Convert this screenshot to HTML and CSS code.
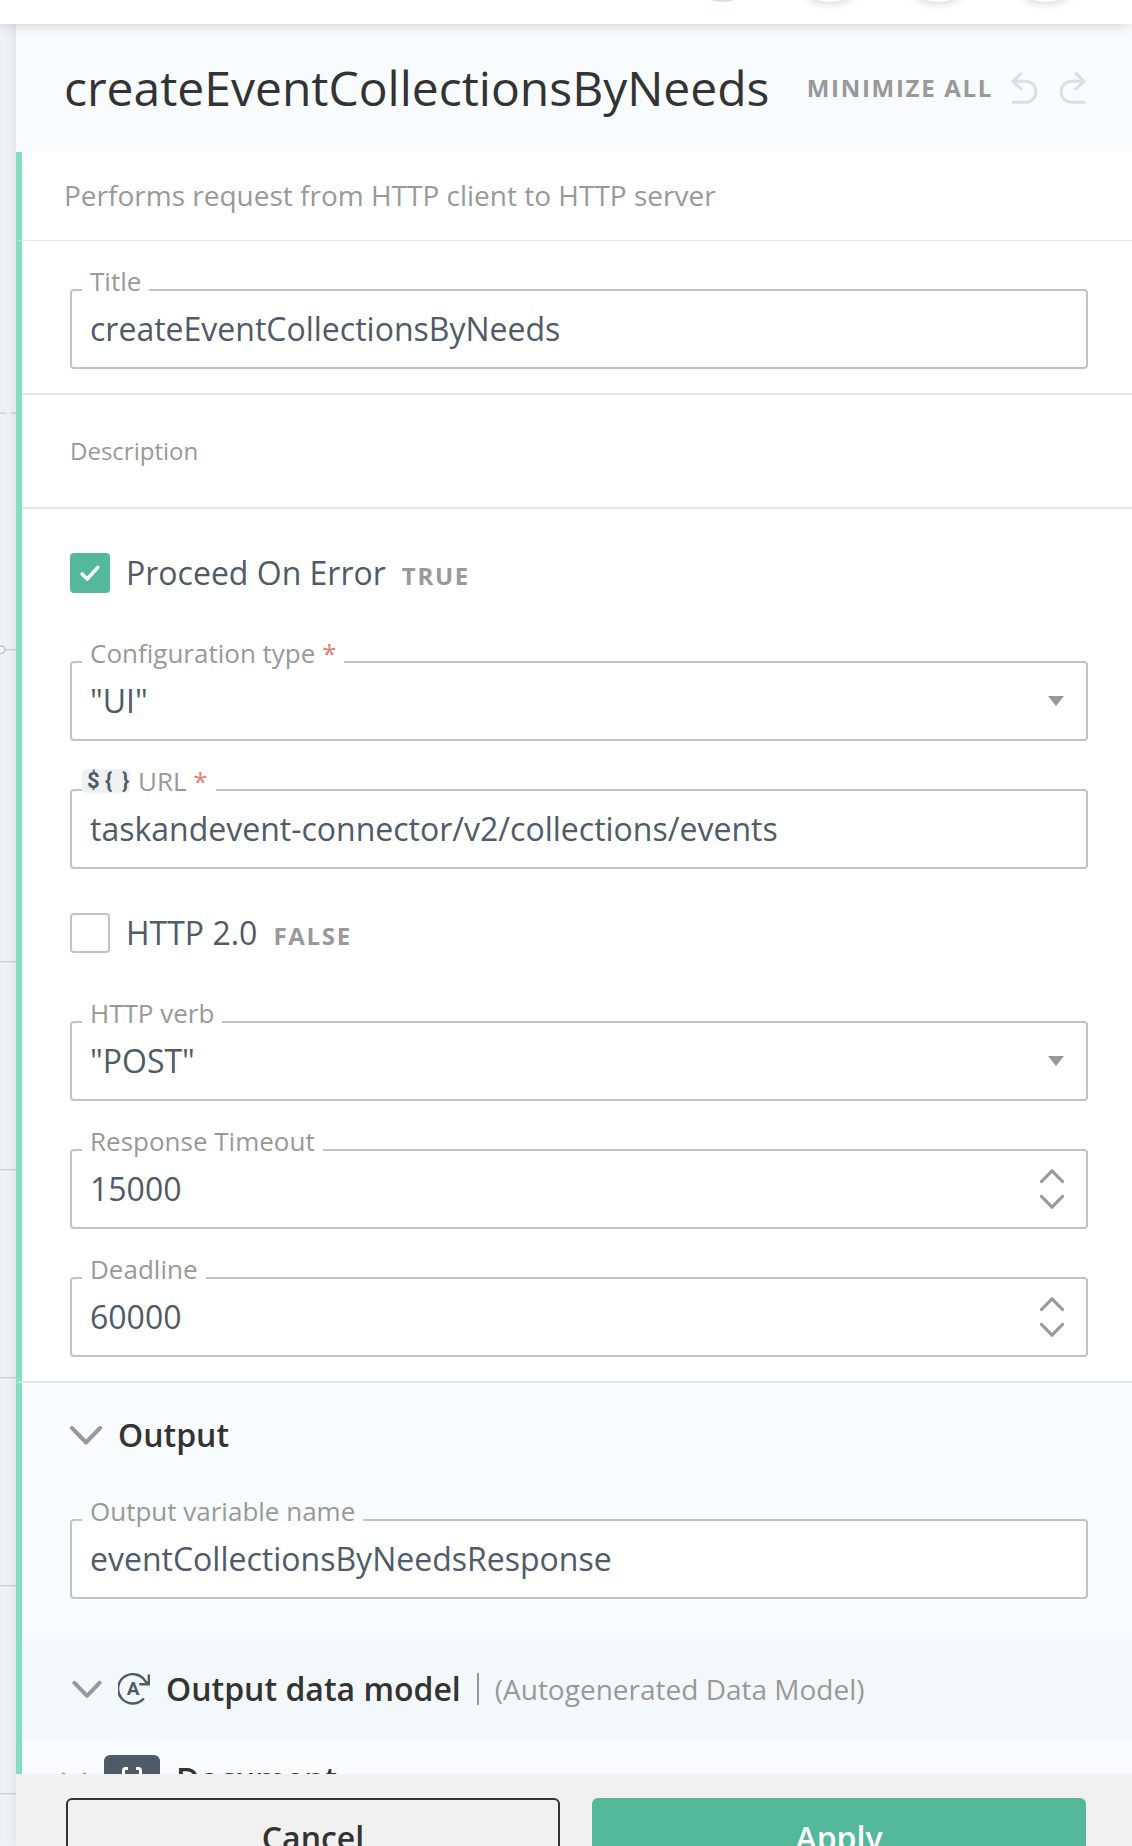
FILE: index.html
```html
<!DOCTYPE html>
<html lang="en">
<head>
<meta charset="utf-8">
<title>createEventCollectionsByNeeds</title>
<link rel="stylesheet" href="styles.css">
</head>
<body>
<div class="app">
  <header class="topbar">
    <span class="round round-active"></span>
    <span class="round"></span>
    <span class="round"></span>
    <span class="round"></span>
  </header>
  <div class="workspace">
    <aside class="canvas">
      <svg width="16" height="1822" viewBox="0 24 16 1822" fill="none" stroke="#cfd3d8" stroke-width="1.5">
        <path d="M0 413.3h6.5M11 413.3h5M5 649.7h11M0 961.7h16M0 1169.7h16M0 1377.7h16M0 1585.7h16M0 1793.7h16"/>
        <circle cx="1" cy="649.7" r="3.8" fill="#f4f7f4" stroke="#bcc8c2"/>
      </svg>
    </aside>
    <main class="panel">
      <div class="panel-head">
        <h1>createEventCollectionsByNeeds</h1>
        <button class="minimize">MINIMIZE ALL</button>
        <svg class="history" width="26" height="34" viewBox="0 0 26 34"><path d="M10 2.700 1.900 10.300l8.100 7.600M1.900 10.300H14.500a10.500 10.500 0 0 1 0 21H1.900"/></svg>
        <svg class="history redo" width="26" height="34" viewBox="0 0 26 34"><path d="M16 2.700l8.100 7.600-8.100 7.600M24.100 10.300H11.500a10.500 10.500 0 0 0 0 21h12.600"/></svg>
      </div>

      <div class="panel-body">
        <section class="summary">Performs request from HTTP client to HTTP server</section>

        <section class="config">
          <div class="group group-title">
            <div class="field"><label>Title</label><span class="value">createEventCollectionsByNeeds</span></div>
          </div>
          <div class="group group-description">Description</div>
          <div class="group group-fields">
            <div class="check">
              <span class="box box-on"><svg width="20" height="17" viewBox="0 0 20 17"><path d="M2.2 9l5 5L17.8 2.4"/></svg></span>
              <span class="check-label">Proceed On Error</span><span class="state">TRUE</span>
            </div>
            <div class="field">
              <label>Configuration type <i>*</i></label><span class="value">"UI"</span>
              <svg class="caret" width="16" height="10" viewBox="0 0 16 10"><path d="M0 0h16L8 10z"/></svg>
            </div>
            <div class="field">
              <label class="with-chip"><span class="chip"><b>$</b><b>{</b><b>}</b></span>URL <i>*</i></label><span class="value">taskandevent-connector/v2/collections/events</span>
            </div>
            <div class="check check-inner">
              <span class="box"></span>
              <span class="check-label">HTTP 2.0</span><span class="state">FALSE</span>
            </div>
            <div class="field">
              <label>HTTP verb</label><span class="value">"POST"</span>
              <svg class="caret" width="16" height="10" viewBox="0 0 16 10"><path d="M0 0h16L8 10z"/></svg>
            </div>
            <div class="field">
              <label>Response Timeout</label><span class="value">15000</span>
              <svg class="stepper" width="24" height="40" viewBox="0 0 24 40"><path d="M1.500 12.500 12 1.800l10.500 10.700M1.500 27.500 12 38.200l10.500-10.700"/></svg>
            </div>
            <div class="field">
              <label>Deadline</label><span class="value">60000</span>
              <svg class="stepper" width="24" height="40" viewBox="0 0 24 40"><path d="M1.500 12.500 12 1.800l10.500 10.700M1.500 27.500 12 38.200l10.500-10.700"/></svg>
            </div>
          </div>
        </section>

        <section class="output">
          <div class="output-head">
            <svg class="chevron" width="32" height="20" viewBox="0 0 32 20"><path d="M2 3l14 14.500L30 3"/></svg>
            <h2>Output</h2>
          </div>
          <div class="output-field">
            <div class="field"><label>Output variable name</label><span class="value">eventCollectionsByNeedsResponse</span></div>
          </div>
          <div class="model">
            <svg class="chevron" width="30" height="18" viewBox="0 0 30 18"><path d="M2.500 2.800l12.500 13L27.500 2.800"/></svg>
            <svg class="auto" width="32" height="32" viewBox="0 0 32 32">
              <path d="M25.200 26.200A14.700 14.700 0 1 1 27.500 8.500L30.500 11.300M30.800 2.500V11.300H22.300"/>
              <text x="15.100" y="22" text-anchor="middle">A</text>
            </svg>
            <h2>Output data model</h2>
            <span class="divider"></span>
            <span class="hint">(Autogenerated Data Model)</span>
          </div>
          <div class="document">
            <svg class="chevron" width="26" height="16" viewBox="0 0 26 16"><path d="M2.500 2.500L13 13.500 23.500 2.500"/></svg>
            <span class="type"><svg width="20" height="24" viewBox="0 0 20 24"><path d="M6 1.500H3.500Q1.500 1.500 1.500 3.500V20.500Q1.500 22.500 3.500 22.500H6M14 1.500h2.500Q18.500 1.500 18.500 3.500V20.500Q18.500 22.500 16.500 22.500H14"/></svg></span>
            <h2>Document</h2>
          </div>
        </section>
      </div>

      <footer class="actions">
        <button class="btn cancel">Cancel</button>
        <button class="btn apply">Apply</button>
      </footer>
    </main>
  </div>
</div>
</body>
</html>
```
FILE: styles.css
```css
* { box-sizing: border-box; }
body {
  margin: 0;
  font-family: "Open Sans", "Noto Sans", sans-serif;
  color: #333;
  background: #fff;
}
h1, h2 { margin: 0; }
button { font-family: inherit; border: 0; background: none; padding: 0; }
svg { display: block; flex: none; }

.app { display: flex; flex-direction: column; height: 1846px; overflow: hidden; }

.topbar {
  position: relative;
  z-index: 2;
  flex: none;
  height: 24px;
  display: flex;
  justify-content: flex-end;
  align-items: flex-end;
  gap: 28px;
  padding: 0 46px 22px 0;
  background: #fff;
  box-shadow: 0 0 14px rgba(0, 0, 0, .2);
  clip-path: inset(0 0 -20px 0);
}
.round { flex: none; width: 80px; height: 80px; border-radius: 50%; background: #fff; box-shadow: 0 2px 8px rgba(0, 0, 0, .16); }
.round-active { background: #d3e0e2; box-shadow: none; }

.workspace { flex: 1; min-height: 0; display: flex; }
.canvas { flex: none; width: 16px; background: #eff3f8; }

.panel {
  position: relative;
  flex: 1;
  display: flex;
  flex-direction: column;
  background: #fff;
  box-shadow: 0 0 12px rgba(0, 0, 0, .1);
}
.panel-head {
  flex: none;
  height: 128px;
  display: flex;
  align-items: center;
  padding: 0 46px 0 48px;
  background: #f8fcff;
}
.panel-head h1 { flex: 1; font-size: 48px; font-weight: 400; line-height: 64px; white-space: nowrap; }
.minimize { margin: -2px 18px 0 0; font-size: 24px; font-weight: 700; letter-spacing: 1.7px; color: #999; white-space: nowrap; }
.history { fill: none; stroke: #d8e0e2; stroke-width: 3; stroke-linecap: round; stroke-linejoin: round; }
.redo { margin-left: 23px; }

.panel-body { height: 1622px; flex: none; overflow: hidden; }
.panel-body section { border-left: 6px solid #84dfc1; }
.summary {
  height: 89px;
  padding: 0 42px;
  border-bottom: 1px solid #e5e5e5;
  font-size: 28px;
  line-height: 87px;
  color: #999;
}
.config { border-bottom: 2px solid #e5e5e5; }
.group { padding: 0 44px 0 48px; }
.group-title { padding-top: 48px; padding-bottom: 24px; border-bottom: 2px solid #e5e5e5; }
.group-description { height: 114px; border-bottom: 2px solid #e5e5e5; font-size: 24px; line-height: 112px; color: #999; }
.group-fields { display: flex; flex-direction: column; gap: 48px; padding-top: 44px; padding-bottom: 24px; }

.field {
  position: relative;
  display: flex;
  align-items: center;
  justify-content: space-between;
  height: 80px;
  padding: 0 22px 0 18px;
  border: 2px solid #bec4c8;
  border-radius: 4px;
  background: #fff;
}
/* Floating label; the strip behind it opens a gap in the border */
.field label {
  position: absolute;
  left: 10px;
  top: -28px;
  height: 36px;
  padding: 0 8px;
  font-size: 26px;
  line-height: 36px;
  color: #999;
  white-space: nowrap;
}
.field label::before {
  content: "";
  position: absolute;
  z-index: -1;
  left: 0;
  right: 0;
  top: 26px;
  height: 2px;
  background: #fff;
}
.field label { z-index: 1; }
.field label i { font-style: normal; color: #e27d70; }
.output .field label::before { background: #f8fcff; }
.value { font-size: 32px; line-height: 44px; color: #4f5b68; white-space: nowrap; }
.caret { fill: #999; }
.stepper { fill: none; stroke: #999; stroke-width: 3.2; stroke-linecap: round; stroke-linejoin: round; }

.field .with-chip { display: flex; align-items: center; padding-left: 0; white-space: pre; }
.chip {
  display: grid;
  grid-template-columns: 18px 17px 10px;
  align-items: center;
  width: 48px;
  height: 24px;
  margin-right: 8px;
  padding-left: 5px;
  border-radius: 5px;
  background: #edf1f2;
  font-family: Roboto, sans-serif;
  font-size: 22px;
  line-height: 24px;
  color: #4f5b68;
}
.chip b { font-weight: 700; }

.check { display: flex; align-items: center; height: 40px; margin-bottom: 20px; }
.check-inner { margin-top: -4px; }
.box { flex: none; width: 40px; height: 40px; display: flex; align-items: center; justify-content: center; border: 2px solid #bec4c8; border-radius: 4px; background: #fff; }
.box-on { border: 0; background: #54b89b; }
.box-on svg { fill: none; stroke: #fff; stroke-width: 3.6; stroke-linecap: round; stroke-linejoin: round; }
.check-label { margin-left: 16px; font-size: 32px; line-height: 40px; color: #4f5b68; }
.state { margin: 5px 0 0 16px; font-size: 24px; font-weight: 700; line-height: 32px; letter-spacing: 1.7px; color: #999; }

.output { background: #f8fcff; }
.output h2 { font-size: 32px; font-weight: 600; line-height: 44px; white-space: nowrap; }
.chevron { fill: none; stroke: #999; stroke-width: 4; stroke-linecap: round; stroke-linejoin: round; }
.output-head { display: flex; align-items: center; gap: 16px; height: 104px; padding-left: 48px; }
.output-field { padding: 32px 44px 40px 48px; }
.model { display: flex; align-items: center; height: 100px; padding-left: 50px; background: #f3f8fb; }
.auto { margin: 0 16px 0 16px; fill: none; stroke: #4f5b68; stroke-width: 2.4; stroke-linecap: round; }
.auto text { font: 700 19px Roboto, sans-serif; fill: #4f5b68; stroke: none; }
.divider { width: 2px; height: 32px; margin: 0 16px; background: #999; }
.hint { font-size: 28px; color: #999; }
.document { display: flex; align-items: center; height: 80px; padding-left: 39px; }
.document .chevron { margin-top: 2px; }
.type { display: flex; align-items: center; justify-content: center; width: 56px; height: 48px; margin: 0 16px 0 17px; border-radius: 6px; background: #4f5b68; }
.type svg { fill: none; stroke: #fff; stroke-width: 3; }

.actions { flex: none; display: grid; grid-template-columns: 1fr 1fr; gap: 32px; padding: 24px 46px 24px 50px; background: #f1f1ef; }
.btn { height: 80px; border-radius: 6px; font-size: 32px; font-weight: 600; line-height: 44px; color: #333; }
.cancel { border: 2px solid #333; }
.apply { background: #54b89b; color: #fff; }
```
